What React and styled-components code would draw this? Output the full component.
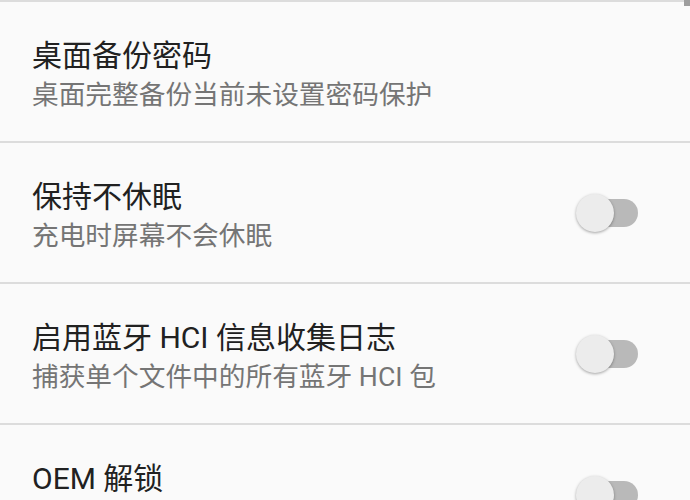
import React from 'react'
import styled, { createGlobalStyle } from 'styled-components'

const GlobalStyle = createGlobalStyle`
  html, body {
    margin: 0;
    padding: 0;
    background: #fafafa;
  }
  body {
    font-family: Roboto, "Noto Sans CJK SC", sans-serif;
  }
`

const Screen = styled.div`
  position: relative;
  width: 690px;
  height: 500px;
  overflow: hidden;
  background: #fafafa;
`

const List = styled.div`
  display: flex;
  flex-direction: column;
`

const Row = styled.div`
  display: flex;
  align-items: center;
  height: 134px;
  padding: 5px 52px 0 32px;
  border-top: 2px solid #dcdcdc;
  flex-shrink: 0;
`

const TextBlock = styled.div`
  flex: 1;
  display: flex;
  flex-direction: column;
`

const Title = styled.div`
  font-size: 30px;
  line-height: 40px;
  color: #212121;
`

const Summary = styled.div`
  margin-top: 1px;
  font-size: 26.7px;
  line-height: 36px;
  color: #757575;
`

const Switch = styled.div`
  position: relative;
  width: 62px;
  height: 40px;
  margin-top: -5px;
  flex-shrink: 0;
`

const Track = styled.div`
  position: absolute;
  left: 4px;
  right: 0;
  top: 6px;
  height: 28px;
  border-radius: 14px;
  background: ${props => (props.on ? '#80cbc4' : '#b9b9b9')};
`

const Thumb = styled.div`
  position: absolute;
  top: 1px;
  left: ${props => (props.on ? '24px' : '0')};
  width: 38px;
  height: 38px;
  border-radius: 50%;
  background: ${props => (props.on ? '#009688' : '#ececec')};
  box-shadow: 0 1px 3px rgba(0, 0, 0, 0.35);
`

const ScrollThumb = styled.div`
  position: absolute;
  top: 0;
  right: 0;
  width: 6px;
  height: 6px;
  background: #9e9e9e;
`

const Toggle = ({ on }) => (
  <Switch>
    <Track on={on} />
    <Thumb on={on} />
  </Switch>
)

const items = [
  { title: '桌面备份密码', summary: '桌面完整备份当前未设置密码保护' },
  { title: '保持不休眠', summary: '充电时屏幕不会休眠', toggle: true },
  { title: '启用蓝牙 HCI 信息收集日志', summary: '捕获单个文件中的所有蓝牙 HCI 包', toggle: true },
  { title: 'OEM 解锁', summary: '允许解锁引导加载程序', toggle: true }
]

export default () => (
  <Screen>
    <GlobalStyle />
    <List>
      {items.map(item => (
        <Row key={item.title}>
          <TextBlock>
            <Title>{item.title}</Title>
            <Summary>{item.summary}</Summary>
          </TextBlock>
          {item.toggle && <Toggle on={false} />}
        </Row>
      ))}
    </List>
    <ScrollThumb />
  </Screen>
)
